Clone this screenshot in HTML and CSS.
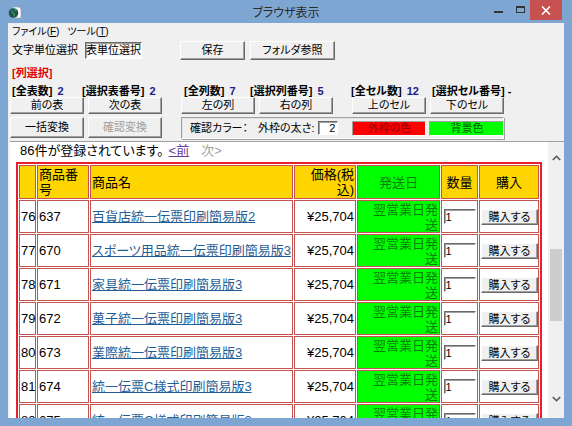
FILE: index.html
```html
<!DOCTYPE html>
<html>
  <head>
    <title>ブラウザ表示</title>
    <meta charset="UTF-8">
    <link rel="stylesheet" href="styles.css">
  </head>
  <body>
    <div class="window">
      <div class="titlebar">
        <div class="title-left">
          <svg class="app-icon" width="14" height="13" viewBox="0 0 14 13">
            <path d="M5 1h6l2 2v9H5z" fill="#fff" stroke="#9aa5b0" stroke-width="0.8"/>
            <circle cx="5.5" cy="7" r="4.8" fill="#1d4f55"/>
            <path d="M3 4.5c1.5 0.8 1 2.5 2.6 2.8 1.2 0.2 1 1.8 0 2.6M7 3.2c-0.6 1 0.4 1.6 1.6 1.4" stroke="#3f9a5a" stroke-width="1.3" fill="none"/>
          </svg>
        </div>
        <div class="title">ブラウザ表示</div>
        <div class="caption-btns">
          <span class="cap-min"><i></i></span>
          <span class="cap-max"><i></i></span>
          <span class="cap-close">
            <svg width="10" height="9" viewBox="0 0 10 9"><path d="M1 0.5l8 8M9 0.5l-8 8" stroke="#fff" stroke-width="1.6"/></svg>
          </span>
        </div>
      </div>

      <div class="client">
        <div class="menubar">
          <span class="menu-item">ファイル(<u>F</u>)</span>
          <span class="menu-item">ツール(<u>T</u>)</span>
        </div>

        <div class="toolbar">
          <span class="mode-label">文字単位選択</span>
          <span class="mode-toggle">表単位選択</span>
          <button class="btn btn-save">保存</button>
          <button class="btn btn-folder">フォルダ参照</button>
        </div>

        <div class="select-title">[列選択]</div>

        <div class="counts">
          <span>[全表数] <span class="num">2</span></span>
          <span>[選択表番号] <span class="num">2</span></span>
          <span>[全列数] <span class="num">7</span></span>
          <span>[選択列番号] <span class="num">5</span></span>
          <span>[全セル数] <span class="num">12</span></span>
          <span>[選択セル番号] -</span>
        </div>

        <div class="btn-grid row-nav">
          <div class="pair">
            <button class="btn">前の表</button>
            <button class="btn">次の表</button>
          </div>
          <div class="pair">
            <button class="btn">左の列</button>
            <button class="btn">右の列</button>
          </div>
          <div class="pair">
            <button class="btn">上のセル</button>
            <button class="btn">下のセル</button>
          </div>
        </div>

        <div class="btn-grid row-convert">
          <div class="pair">
            <button class="btn">一括変換</button>
            <button class="btn" disabled>確認変換</button>
          </div>
          <div class="color-box">
            <span class="color-label">確認カラー：</span>
            <span class="width-label">外枠の太さ:</span>
            <input class="width-input" type="text" value="2">
            <span class="swatch swatch-border">外枠の色</span>
            <span class="swatch swatch-bg">背景色</span>
          </div>
        </div>

        <div class="browser">
          <div class="page">
            <div class="result-line">86件が登録されています。<a class="prev" href="#">&lt;前</a><span class="next">次&gt;</span></div>
            <table class="items">
              <thead>
                <tr>
                  <th class="c-no"></th>
                  <th class="c-code">商品番号</th>
                  <th class="c-name">商品名</th>
                  <th class="c-price">価格(税込)</th>
                  <th class="c-ship">発送日</th>
                  <th class="c-qty">数量</th>
                  <th class="c-buy">購入</th>
                </tr>
              </thead>
              <tbody>
                <tr>
                  <td>76</td><td>637</td><td><a href="#">百貨店統一伝票印刷簡易版2</a></td><td class="price">¥25,704</td>
                  <td class="ship">翌営業日発送</td><td><input class="qty" type="text" value="1"></td><td><button class="buy">購入する</button></td>
                </tr>
                <tr>
                  <td>77</td><td>670</td><td><a href="#">スポーツ用品統一伝票印刷簡易版3</a></td><td class="price">¥25,704</td>
                  <td class="ship">翌営業日発送</td><td><input class="qty" type="text" value="1"></td><td><button class="buy">購入する</button></td>
                </tr>
                <tr>
                  <td>78</td><td>671</td><td><a href="#">家具統一伝票印刷簡易版3</a></td><td class="price">¥25,704</td>
                  <td class="ship">翌営業日発送</td><td><input class="qty" type="text" value="1"></td><td><button class="buy">購入する</button></td>
                </tr>
                <tr>
                  <td>79</td><td>672</td><td><a href="#">菓子統一伝票印刷簡易版3</a></td><td class="price">¥25,704</td>
                  <td class="ship">翌営業日発送</td><td><input class="qty" type="text" value="1"></td><td><button class="buy">購入する</button></td>
                </tr>
                <tr>
                  <td>80</td><td>673</td><td><a href="#">業際統一伝票印刷簡易版3</a></td><td class="price">¥25,704</td>
                  <td class="ship">翌営業日発送</td><td><input class="qty" type="text" value="1"></td><td><button class="buy">購入する</button></td>
                </tr>
                <tr>
                  <td>81</td><td>674</td><td><a href="#">統一伝票C様式印刷簡易版3</a></td><td class="price">¥25,704</td>
                  <td class="ship">翌営業日発送</td><td><input class="qty" type="text" value="1"></td><td><button class="buy">購入する</button></td>
                </tr>
                <tr>
                  <td>82</td><td>675</td><td><a href="#">統一伝票C様式印刷簡易版3</a></td><td class="price">¥25,704</td>
                  <td class="ship">翌営業日発送</td><td><input class="qty" type="text" value="1"></td><td><button class="buy">購入する</button></td>
                </tr>
              </tbody>
            </table>
          </div>
          <div class="vscroll">
            <div class="sb-up">
              <svg width="9" height="6" viewBox="0 0 9 6"><path d="M0.8 5L4.5 1.3 8.2 5" stroke="#555" stroke-width="1.6" fill="none"/></svg>
            </div>
            <div class="sb-gap"></div>
            <div class="sb-thumb"></div>
            <div class="sb-fill"></div>
            <div class="sb-down">
              <svg width="9" height="6" viewBox="0 0 9 6"><path d="M0.8 1L4.5 4.7 8.2 1" stroke="#555" stroke-width="1.6" fill="none"/></svg>
            </div>
          </div>
        </div>
      </div>
    </div>
  </body>
</html>
```

FILE: styles.css
```css
/* Browser view window */
* {
  box-sizing: border-box;
}

body {
  margin: 0;
  font-family: "Liberation Sans", "Noto Sans CJK JP", sans-serif;
  font-feature-settings: "palt";
  color: #000;
}

.window {
  width: 572px;
  height: 426px;
  background-color: #7ea6d3;
  display: flex;
  flex-direction: column;
  overflow: hidden;
}

/* Title bar */
.titlebar {
  height: 23px;
  display: grid;
  grid-template-columns: 1fr auto 1fr;
  align-items: start;
}

.app-icon {
  display: block;
  margin: 6px 0 0 8px;
}

.title {
  font-size: 12px;
  line-height: 16px;
  padding-top: 5px;
  color: #2a2a2a;
}

.caption-btns {
  justify-self: end;
  display: flex;
  margin-right: 10px;
}

.cap-min,
.cap-max {
  height: 20px;
  display: flex;
  align-items: center;
  justify-content: center;
}

.cap-min {
  width: 24px;
}

.cap-min i {
  display: block;
  width: 9px;
  height: 2px;
  margin-top: 4px;
  background-color: #333;
}

.cap-max {
  width: 20px;
}

.cap-max i {
  display: block;
  width: 9px;
  height: 7px;
  margin-top: -2px;
  border: 1px solid #333;
  border-top-width: 2px;
}

.cap-close {
  width: 32px;
  height: 20px;
  background-color: #c75050;
  display: flex;
  align-items: center;
  justify-content: center;
}

/* Client area */
.client {
  margin: 0 8px;
  height: 395px;
  background-color: #f0f0f0;
  display: flex;
  flex-direction: column;
  font-size: 11px;
  white-space: nowrap;
}

.menubar {
  height: 17px;
  display: flex;
  align-items: center;
  padding-left: 4px;
  gap: 8px;
  font-size: 10px;
  line-height: 13px;
}

.toolbar {
  height: 20px;
  display: flex;
  align-items: center;
  padding-left: 4px;
  line-height: 13px;
}

.mode-label {
  width: 73px;
  flex-shrink: 0;
}

.mode-toggle {
  width: 57px;
  height: 17px;
  display: flex;
  align-items: center;
  justify-content: center;
  background-color: #fbfbfb;
  border: 1px solid;
  border-color: #6a6a6a #fff #fff #6a6a6a;
  box-shadow: inset 1px 1px #a0a0a0;
}

.btn {
  font: inherit;
  font-size: 11px;
  line-height: 13px;
  color: #000;
  background-color: #f0f0f0;
  padding: 0;
  border: 1px solid;
  border-color: #fff #6a6a6a #6a6a6a #fff;
  box-shadow: inset -1px -1px #a0a0a0;
  height: 19px;
}

.btn:disabled {
  color: #a0a0a0;
}

.btn-save {
  width: 65px;
  margin-left: 38px;
}

.btn-folder {
  width: 85px;
  margin-left: 5px;
}

.select-title {
  margin-top: 7px;
  height: 12px;
  line-height: 12px;
  padding-left: 4px;
  color: #e00000;
  font-weight: bold;
}

.counts {
  margin-top: 6px;
  height: 12px;
  line-height: 12px;
  padding-left: 4px;
  display: grid;
  grid-template-columns: 70px 102px 66px 101px 81px auto;
  font-weight: bold;
}

.num {
  color: #1c1c8a;
  margin-left: 2px;
}

.btn-grid {
  display: grid;
  grid-template-columns: 152px 152px 152px;
  column-gap: 19px;
  padding-left: 2px;
}

.row-nav {
  height: 17px;
}

.row-nav .btn {
  height: 17px;
}

.row-convert {
  margin-top: 3px;
  height: 22px;
}

.row-convert .btn {
  height: 21px;
}

.pair {
  display: flex;
  gap: 4px;
}

.pair .btn {
  flex: 1;
}

.color-box {
  grid-column: span 2;
  display: flex;
  align-items: center;
  padding-left: 8px;
  border: 1px solid;
  border-color: #a0a0a0 #fff #fff #a0a0a0;
  box-shadow: inset 1px 1px #e3e3e3, 1px 1px #a0a0a0;
  line-height: 13px;
}

.color-box > * {
  flex-shrink: 0;
}

.color-label {
  width: 68px;
}

.width-input {
  width: 20px;
  height: 14px;
  margin-left: 4px;
  padding: 0 2px 0 0;
  font: inherit;
  font-size: 11px;
  text-align: right;
  background-color: #fff;
  border: 1px solid;
  border-color: #6a6a6a #fff #fff #6a6a6a;
  box-shadow: inset 1px 1px #a0a0a0;
}

.swatch {
  height: 15px;
  width: 74px;
  display: flex;
  align-items: center;
  justify-content: center;
  border: 1px solid;
  border-color: #a0a0a0 #fff #fff #a0a0a0;
}

.swatch-border {
  margin-left: 14px;
  background-color: #ff0000;
  color: #8a0000;
}

.swatch-bg {
  margin-left: 3px;
  width: 75px;
  background-color: #00ff00;
  color: #006000;
}

/* Embedded browser */
.browser {
  flex: 1;
  min-height: 0;
  margin: 2px 0 0 2px;
  display: flex;
  border-top: 1px solid #a0a0a0;
  white-space: normal;
}

.page {
  flex: 1;
  background-color: #fff;
  overflow: hidden;
  padding: 1px 0 0 6px;
}

.result-line {
  font-size: 13px;
  line-height: 16px;
  height: 16px;
  padding-left: 4px;
  white-space: nowrap;
}

.prev {
  margin-left: 5px;
  color: #6a3d9a;
}

.next {
  margin-left: 12px;
  color: #a0a0a0;
}

.items {
  margin-top: 3px;
  width: 526px;
  table-layout: fixed;
  border-collapse: separate;
  border-spacing: 1px;
  border: 2px solid #e8202e;
  font-size: 13px;
  line-height: 15px;
}

.items th,
.items td {
  border: 1px solid #c4524f;
  padding: 0 1px;
  vertical-align: middle;
  text-align: left;
  font-weight: normal;
}

.items th {
  height: 34px;
  background-color: #ffd500;
}

.items td {
  height: 33px;
}

.c-no { width: 17px; }
.c-code { width: 52px; }
.c-name { width: 203px; }
.c-price { width: 62px; }
.c-ship { width: 83px; }
.c-qty { width: 37px; }
.c-buy { width: 60px; }

.items th.c-price {
  text-align: right;
}

.items th.c-ship {
  background-color: #00ff00;
  color: #0b800b;
  text-align: center;
}

.items th.c-qty,
.items th.c-buy {
  text-align: center;
}

.items a {
  color: #1f5e96;
}

.items td.price {
  text-align: right;
}

.items td.ship {
  background-color: #00ff00;
  color: #0b800b;
  text-align: right;
  padding-left: 4px;
}

.qty {
  display: block;
  width: 32px;
  height: 15px;
  margin: 0 auto;
  padding: 0 1px;
  font: inherit;
  font-size: 11px;
  line-height: 12px;
  border: 1px solid;
  border-color: #6a6a6a #fff #fff #6a6a6a;
  box-shadow: inset 1px 1px #a0a0a0;
}

.buy {
  display: block;
  width: 57px;
  height: 16px;
  margin: 0 auto;
  padding: 0;
  font: inherit;
  font-size: 11px;
  line-height: 12px;
  background-color: #f0f0f0;
  border: 1px solid;
  border-color: #fff #6a6a6a #6a6a6a #fff;
  box-shadow: inset -1px -1px #a0a0a0;
}

/* Scrollbar */
.vscroll {
  width: 16px;
  background-color: #f0f0f0;
  display: flex;
  flex-direction: column;
}

.sb-up,
.sb-down {
  display: flex;
  align-items: center;
  justify-content: center;
}

.sb-up {
  height: 32px;
}

.sb-gap {
  height: 75px;
}

.sb-thumb {
  height: 72px;
  margin: 0 2px;
  background-color: #cdcdcd;
}

.sb-fill {
  flex: 1;
}

.sb-down {
  height: 38px;
}
```
